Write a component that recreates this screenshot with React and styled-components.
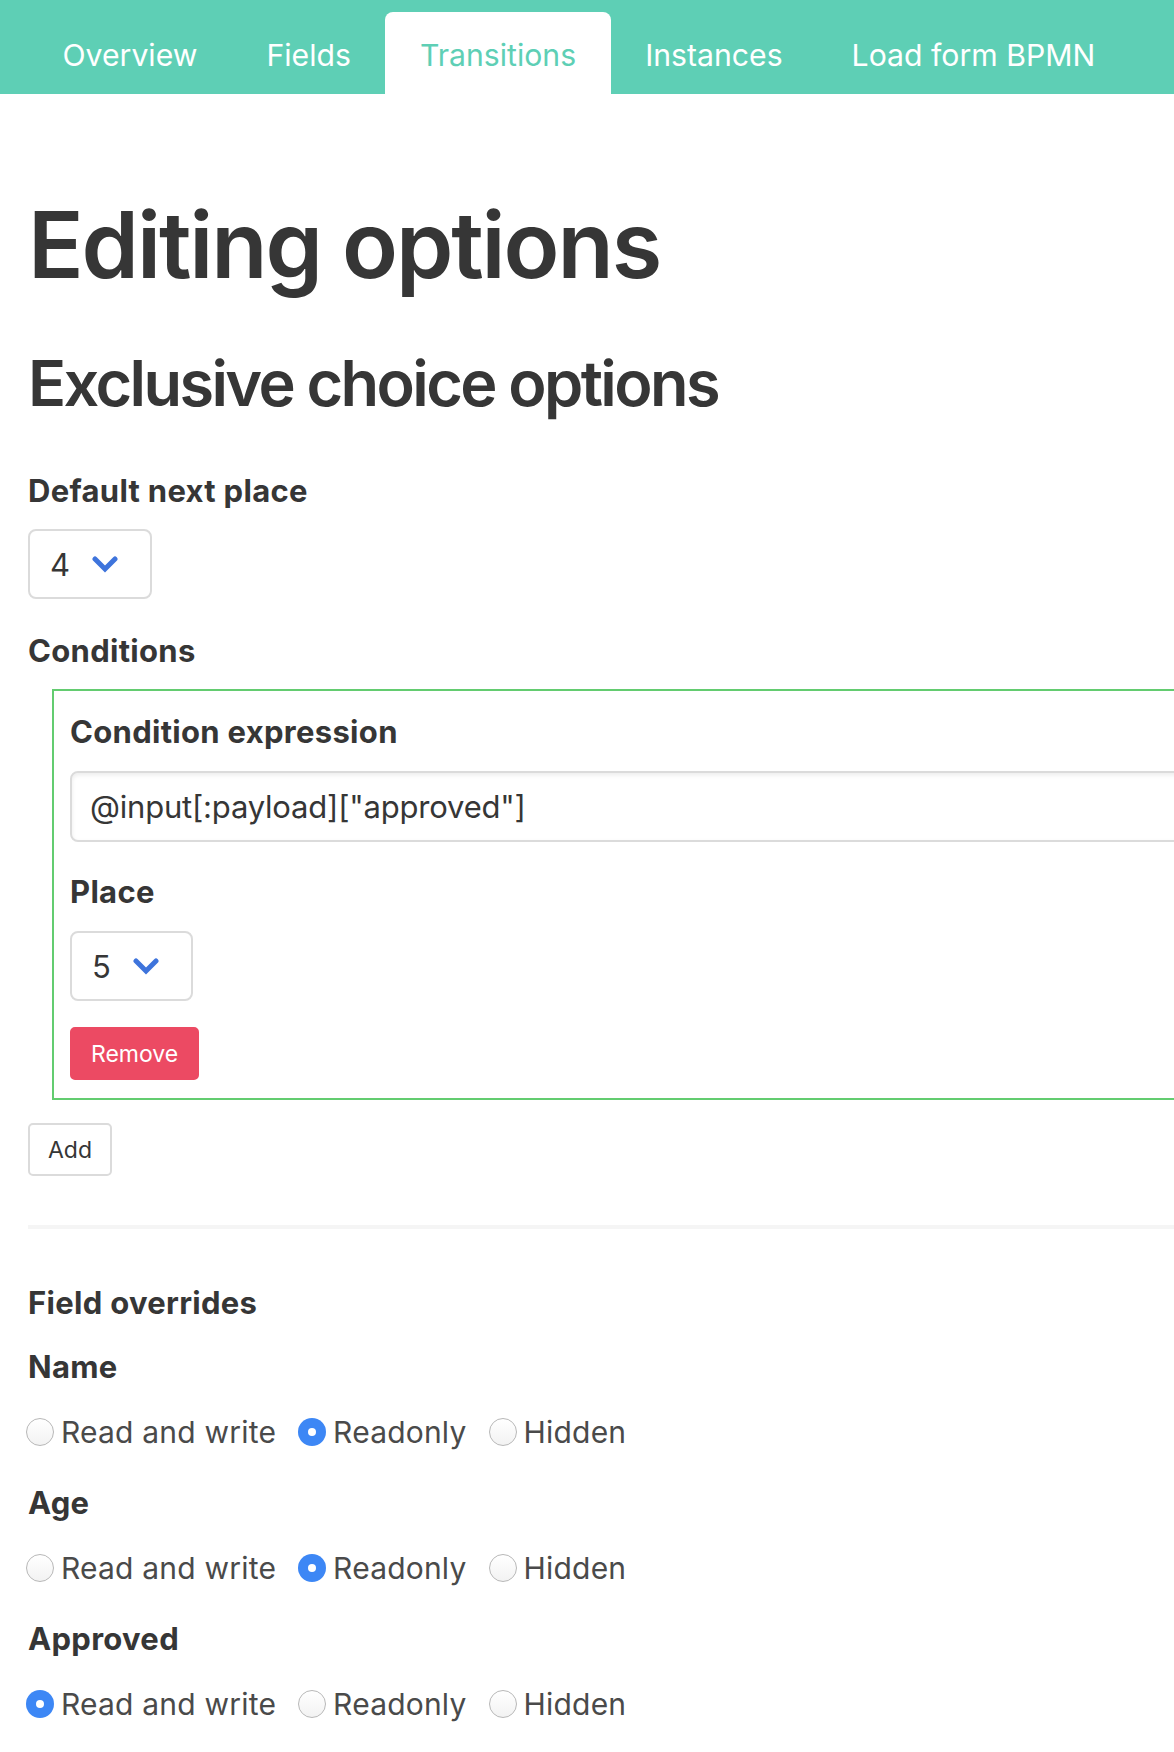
import React from 'react';
import styled, { createGlobalStyle } from 'styled-components';

const TABS = ['Overview', 'Fields', 'Transitions', 'Instances', 'Load form BPMN'];
const ACCESS = ['Read and write', 'Readonly', 'Hidden'];
const OVERRIDES = [
  { field: 'Name', value: 'Readonly' },
  { field: 'Age', value: 'Readonly' },
  { field: 'Approved', value: 'Read and write' },
];

const Chevron = () => (
  <svg width="26" height="17" viewBox="0 0 26 17">
    <polyline
      points="3,3 13,13 23,3"
      fill="none"
      stroke="#3e74dc"
      strokeWidth="5"
      strokeLinecap="round"
      strokeLinejoin="miter"
    />
  </svg>
);

const Dropdown = ({ value }) => (
  <Select>
    <span>{value}</span>
    <Chevron />
  </Select>
);

export default function App() {
  return (
    <>
      <GlobalStyle />
      <Page>
        <Nav>
          {TABS.map(tab => (
            <Tab key={tab} $active={tab === 'Transitions'}>
              {tab}
            </Tab>
          ))}
        </Nav>
        <Main>
          <Title>Editing options</Title>
          <Subtitle>Exclusive choice options</Subtitle>

          <Label $mt={46}>Default next place</Label>
          <Control $mt={16}>
            <Dropdown value="4" />
          </Control>

          <Label $mt={29}>Conditions</Label>
          <ConditionBox>
            <Label>Condition expression</Label>
            <Input defaultValue={'@input[:payload]["approved"]'} />
            <Label $mt={27}>Place</Label>
            <Control $mt={17}>
              <Dropdown value="5" />
            </Control>
            <Control $mt={26}>
              <Button $danger>Remove</Button>
            </Control>
          </ConditionBox>
          <Control $mt={23}>
            <Button>Add</Button>
          </Control>

          <Divider />

          <Label $mt={51}>Field overrides</Label>
          {OVERRIDES.map((o, i) => (
            <section key={o.field}>
              <Label $mt={i === 0 ? 19 : 26}>{o.field}</Label>
              <RadioRow>
                {ACCESS.map(a => (
                  <RadioOption key={a}>
                    <RadioDot $checked={a === o.value} />
                    {a}
                  </RadioOption>
                ))}
              </RadioRow>
            </section>
          ))}
        </Main>
      </Page>
    </>
  );
}

const GlobalStyle = createGlobalStyle`
  html, body {
    margin: 0;
    padding: 0;
    background: #fff;
    overflow-x: hidden;
  }
  body {
    font-family: Inter, "Liberation Sans", sans-serif;
    color: #363636;
  }
`;

const Page = styled.div`
  width: 1174px;
  overflow: hidden;
  padding-bottom: 26px;
`;

const Nav = styled.nav`
  display: flex;
  align-items: flex-end;
  height: 94px;
  padding-left: 28px;
  background: #5ecfb5;
  box-sizing: border-box;
`;

const Tab = styled.a`
  display: flex;
  align-items: center;
  height: 82px;
  padding: 4px 34.5px 0;
  box-sizing: border-box;
  border-radius: 8px 8px 0 0;
  font-size: 30.2px;
  font-weight: 400;
  color: ${p => (p.$active ? '#5ecfb5' : '#fff')};
  background: ${p => (p.$active ? '#fff' : 'transparent')};
  cursor: pointer;
`;

const Main = styled.main`
  padding: 0 28px;
`;

const Title = styled.h1`
  margin: 96px 0 0;
  font-size: 92px;
  line-height: 1.2;
  font-weight: 600;
  letter-spacing: -2.1px;
`;

const Subtitle = styled.h2`
  margin: 44px 0 0;
  font-size: 63px;
  line-height: 78px;
  font-weight: 600;
  letter-spacing: -2.6px;
`;

const Label = styled.div`
  margin-top: ${p => p.$mt || 0}px;
  font-size: 31px;
  line-height: 45px;
  font-weight: 700;
  letter-spacing: 0.3px;
  color: #363636;
`;

const Control = styled.div`
  margin-top: ${p => p.$mt || 0}px;
`;

const Select = styled.div`
  display: inline-flex;
  align-items: center;
  gap: 22px;
  height: 70px;
  padding: 0 32px 0 20px;
  box-sizing: border-box;
  border: 2px solid #dbdbdb;
  border-radius: 8px;
  font-size: 31px;
  color: #363636;
  background: #fff;
`;

const ConditionBox = styled.div`
  width: 1180px;
  margin: 16px 0 0 24px;
  padding: 18px 16px 18px;
  box-sizing: border-box;
  border: 2px solid #63cc70;
`;

const Input = styled.input`
  display: block;
  width: 100%;
  height: 71px;
  margin-top: 17px;
  padding: 0 18px;
  box-sizing: border-box;
  border: 2px solid #dbdbdb;
  border-radius: 8px;
  box-shadow: inset 0 2px 4px rgba(10, 10, 10, 0.08);
  font-family: inherit;
  font-size: 31px;
  letter-spacing: -0.2px;
  color: #363636;
  outline: none;
`;

const Button = styled.button`
  height: 53px;
  padding: 0 ${p => (p.$danger ? 19 : 18)}px;
  border-radius: 5px;
  border: 2px solid ${p => (p.$danger ? '#ec4a63' : '#dbdbdb')};
  background: ${p => (p.$danger ? '#ec4a63' : '#fff')};
  color: ${p => (p.$danger ? '#fff' : '#363636')};
  font-family: inherit;
  font-size: 23px;
  cursor: pointer;
`;

const Divider = styled.hr`
  width: calc(100% + 28px);
  height: 4px;
  margin: 49px 0 0;
  border: none;
  background: #f5f5f5;
`;

const RadioRow = styled.div`
  display: flex;
  align-items: center;
  height: 45px;
  margin-top: 20px;
  margin-left: -2px;
`;

const RadioOption = styled.label`
  display: flex;
  align-items: center;
  gap: 7px;
  margin-right: 22px;
  font-size: 30px;
  letter-spacing: 0.2px;
  color: #4a4a4a;
`;

const RadioDot = styled.span`
  position: relative;
  width: 28px;
  height: 28px;
  box-sizing: border-box;
  border-radius: 50%;
  border: ${p => (p.$checked ? 'none' : '1.5px solid #b8b8b8')};
  background: ${p =>
    p.$checked ? '#3d87f5' : 'linear-gradient(#ffffff, #f2f2f2)'};
  &::after {
    content: '';
    display: ${p => (p.$checked ? 'block' : 'none')};
    position: absolute;
    top: 10px;
    left: 10px;
    width: 8px;
    height: 8px;
    border-radius: 50%;
    background: #fff;
  }
`;
